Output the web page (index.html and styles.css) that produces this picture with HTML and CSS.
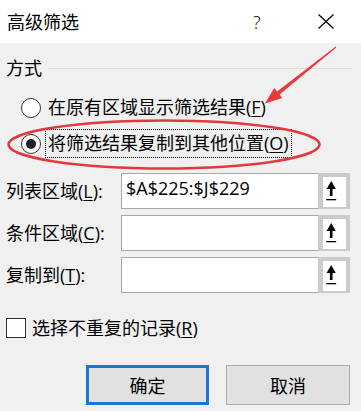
FILE: index.html
```html
<!DOCTYPE html>
<html lang="zh-CN">
<head>
<meta charset="utf-8">
<title>高级筛选</title>
<link rel="stylesheet" href="styles.css">
</head>
<body>
<div class="titlebar">
  <span class="title">高级筛选</span>
  <span class="help">?</span>
  <svg class="close" width="16" height="15" viewBox="0 0 16 15"><path d="M0.5 0.5 L15.5 14.5 M15.5 0.5 L0.5 14.5" stroke="#000" stroke-width="1.2" fill="none"/></svg>
</div>
<div class="content">
  <div class="legend"><span>方式</span></div>
  <div class="radios">
    <div class="radio-row">
      <span class="radio"></span>
      <span class="rlabel">在原有区域显示筛选结果(<u>F</u>)</span>
    </div>
    <div class="radio-row">
      <span class="radio checked"><span class="dot"></span></span>
      <span class="rlabel focus">将筛选结果复制到其他位置(<u>O</u>)</span>
    </div>
  </div>
  <div class="fields">
    <div class="field">
      <span class="flabel">列表区域(<u>L</u>):</span>
      <div class="input"><span class="itext">$A$225:$J$229</span><span class="pick"><span class="pick-inner"><svg width="23" height="30" viewBox="0 0 23 30"><path d="M3.6 12 L8.2 4 L12.8 12 L9.5 12 L9.5 19 L6.9 19 L6.9 12 Z" fill="#000"/><rect x="3.2" y="22" width="10" height="1.3" fill="#000"/></svg></span></span></div>
    </div>
    <div class="field">
      <span class="flabel">条件区域(<u>C</u>):</span>
      <div class="input"><span class="itext"></span><span class="pick"><span class="pick-inner"><svg width="23" height="30" viewBox="0 0 23 30"><path d="M3.6 12 L8.2 4 L12.8 12 L9.5 12 L9.5 19 L6.9 19 L6.9 12 Z" fill="#000"/><rect x="3.2" y="22" width="10" height="1.3" fill="#000"/></svg></span></span></div>
    </div>
    <div class="field">
      <span class="flabel">复制到(<u>T</u>):</span>
      <div class="input"><span class="itext"></span><span class="pick"><span class="pick-inner"><svg width="23" height="30" viewBox="0 0 23 30"><path d="M3.6 12 L8.2 4 L12.8 12 L9.5 12 L9.5 19 L6.9 19 L6.9 12 Z" fill="#000"/><rect x="3.2" y="22" width="10" height="1.3" fill="#000"/></svg></span></span></div>
    </div>
  </div>
  <div class="check-row">
    <span class="check"></span>
    <span class="clabel">选择不重复的记录(<u>R</u>)</span>
  </div>
  <div class="buttons">
    <button class="btn default">确定</button>
    <button class="btn">取消</button>
  </div>
</div>
<svg class="annot" width="361" height="411" viewBox="0 0 361 411">
  <ellipse cx="164" cy="144.5" rx="155.5" ry="24" fill="none" stroke="#e23a3c" stroke-width="2.6"/>
  <polygon points="265,103.5 282.3,98.1 279.5,94.6 336.3,47.4 335.7,46.6 277.1,91.4 274.3,87.9" fill="#e8383b"/>
</svg>
</body>
</html>
```
FILE: styles.css
```css
* { box-sizing: border-box; }
body {
  margin: 0;
  width: 361px;
  height: 411px;
  overflow: hidden;
  position: relative;
  background: #f0f0f0;
  color: #000;
  font-family: "Open Sans", "Noto Sans CJK SC", sans-serif;
  font-size: 18px;
}
u { text-decoration: underline; text-underline-offset: 2px; text-decoration-thickness: 1px; }
.titlebar {
  height: 43px;
  background: #fff;
  display: flex;
  align-items: center;
  padding-left: 7px;
}
.title { flex: 1; line-height: 20px; }
.help { width: 9px; line-height: 20px; font-weight: 300; }
.close { margin-left: 56px; margin-right: 27px; }
.content { padding: 15px 9px 0 6px; }
.legend { display: flex; align-items: center; height: 20px; line-height: 20px; }
.legend::after { content: ""; flex: 1; height: 1px; background: #dcdcdc; margin-left: 6px; }
.radios { margin-top: 15px; padding-left: 15px; }
.radio-row { display: flex; align-items: center; height: 29px; }
.radio-row + .radio-row { margin-top: 7px; }
.radio {
  width: 20px; height: 20px;
  border: 1px solid #333;
  border-radius: 50%;
  background: #fff;
  display: flex; align-items: center; justify-content: center;
}
.dot { width: 10px; height: 10px; border-radius: 50%; background: #222; }
.rlabel {
  margin-left: 4px;
  padding: 0 2px;
  height: 29px;
  line-height: 27px;
  border: 1px solid transparent;
  white-space: nowrap;
}
.rlabel.focus { border: 1px dotted #000; }
.fields { margin-top: 15px; display: flex; flex-direction: column; gap: 6px; }
.field { display: grid; grid-template-columns: 115px 229px; height: 36px; align-items: center; }
.flabel { line-height: 20px; white-space: nowrap; }
.input { display: flex; height: 36px; }
.itext {
  flex: 1;
  background: #fff;
  border: 1px solid #a8a8a8;
  border-right: none;
  padding-left: 4px;
  line-height: 28px;
}
.pick {
  width: 32px;
  background: #cbcbcb;
  padding: 4px 4px 2px 5px;
  display: flex;
}
.pick-inner { flex: 1; background: #fff; display: flex; align-items: flex-start; }
.check-row { margin-top: 25px; display: flex; align-items: center; height: 20px; }
.check { width: 20px; height: 20px; border: 1px solid #333; background: #fff; }
.clabel { margin-left: 6px; line-height: 20px; }
.buttons { margin-top: 27px; padding-left: 80px; display: flex; gap: 17px; }
.btn {
  width: 124px; height: 40px;
  background: #e1e1e1;
  border: 1px solid #adadad;
  font-family: "Noto Sans CJK SC", sans-serif;
  font-size: 18px;
  color: #000;
  padding: 0;
}
.btn.default { width: 123px; border: 3px solid #1a77d2; }
.annot { position: absolute; left: 0; top: 0; pointer-events: none; }
```
